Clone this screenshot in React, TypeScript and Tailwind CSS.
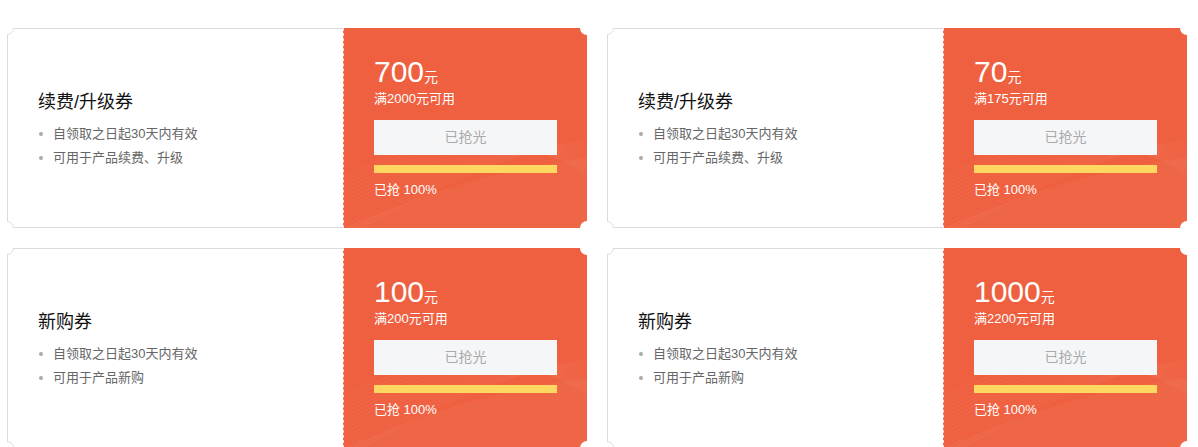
import React from 'react';

type Coupon = {
	title: string;
	amount: string;
	limit: string;
	scope: string;
};

const coupons: Coupon[] = [
	{ title: '续费/升级券', amount: '700', limit: '满2000元可用', scope: '可用于产品续费、升级' },
	{ title: '续费/升级券', amount: '70', limit: '满175元可用', scope: '可用于产品续费、升级' },
	{ title: '新购券', amount: '100', limit: '满200元可用', scope: '可用于产品新购' },
	{ title: '新购券', amount: '1000', limit: '满2200元可用', scope: '可用于产品新购' }
];

// faint wave texture in the red half
const Waves = () => (
	<svg
		className="pointer-events-none absolute inset-0 h-full w-full"
		viewBox="0 0 244 200"
		preserveAspectRatio="none"
	>
		{Array.from({ length: 16 }).map((_, i) => (
			<path
				key={i}
				d={`M-10 ${215 - i * 4} C 70 ${170 - i * 4}, 160 ${120 - i * 2}, 260 ${110 + i * 3}`}
				fill="none"
				stroke="#ffffff"
				strokeOpacity={0.05}
				strokeWidth={1}
			/>
		))}
		<path d="M0 200 C 80 165, 160 140, 244 130 L244 200 Z" fill="#ffffff" fillOpacity={0.04} />
	</svg>
);

const CouponCard = ({ coupon }: { coupon: Coupon }) => (
	<div className="relative flex h-[200px] w-[580px] overflow-hidden">
		<div className="flex w-[336px] flex-col justify-center border-y border-l border-[#dcdcdc] bg-white pl-[30px] pt-[4px]">
			<p className="text-[18px] leading-[24px] text-[#111]">{coupon.title}</p>
			<ul className="mt-[8px] text-[13px] leading-[24px] text-[#666]">
				<li className="flex items-center">
					<span className="ml-[1px] mr-[10px] h-[4px] w-[4px] rounded-full bg-[#aaa]" />
					自领取之日起30天内有效
				</li>
				<li className="flex items-center">
					<span className="ml-[1px] mr-[10px] h-[4px] w-[4px] rounded-full bg-[#aaa]" />
					{coupon.scope}
				</li>
			</ul>
		</div>
		<div className="relative flex w-[244px] flex-col border-l border-dashed border-white/80 bg-[#ef6040] pl-[30px] pr-[30px] pt-[27px] text-white">
			<Waves />
			<div className="relative flex items-end leading-none">
				<span className="text-[30px] leading-[34px]">{coupon.amount}</span>
				<span className="mb-[4px] text-[14px] leading-[16px]">元</span>
			</div>
			<p className="relative mt-[1px] text-[13px] leading-[18px]">{coupon.limit}</p>
			<div className="relative mt-[12px] flex h-[35px] shrink-0 items-center justify-center bg-[#f5f6f8] text-[14px] text-[#aaa]">
				已抢光
			</div>
			<div className="relative mt-[10px] h-[8px] shrink-0 bg-[#ffd862]" />
			<p className="relative mt-[8px] text-[13px] leading-[18px]">已抢 100%</p>
		</div>
		<span className="absolute -left-[7px] -top-[7px] h-[14px] w-[14px] rounded-full border border-[#dcdcdc] bg-white" />
		<span className="absolute -bottom-[7px] -left-[7px] h-[14px] w-[14px] rounded-full border border-[#dcdcdc] bg-white" />
		<span className="absolute -right-[7px] -top-[7px] h-[14px] w-[14px] rounded-full bg-white" />
		<span className="absolute -bottom-[7px] -right-[7px] h-[14px] w-[14px] rounded-full bg-white" />
	</div>
);

const App = () => (
	<div
		className="min-h-[447px] bg-white pl-[7px] pt-[28px]"
		style={{ fontFamily: '"Liberation Sans", "Noto Sans CJK SC", sans-serif' }}
	>
		<div className="grid w-[1180px] grid-cols-[580px_580px] gap-x-[20px] gap-y-[20px]">
			{coupons.map((coupon, i) => (
				<CouponCard key={i} coupon={coupon} />
			))}
		</div>
	</div>
);

export default App;
